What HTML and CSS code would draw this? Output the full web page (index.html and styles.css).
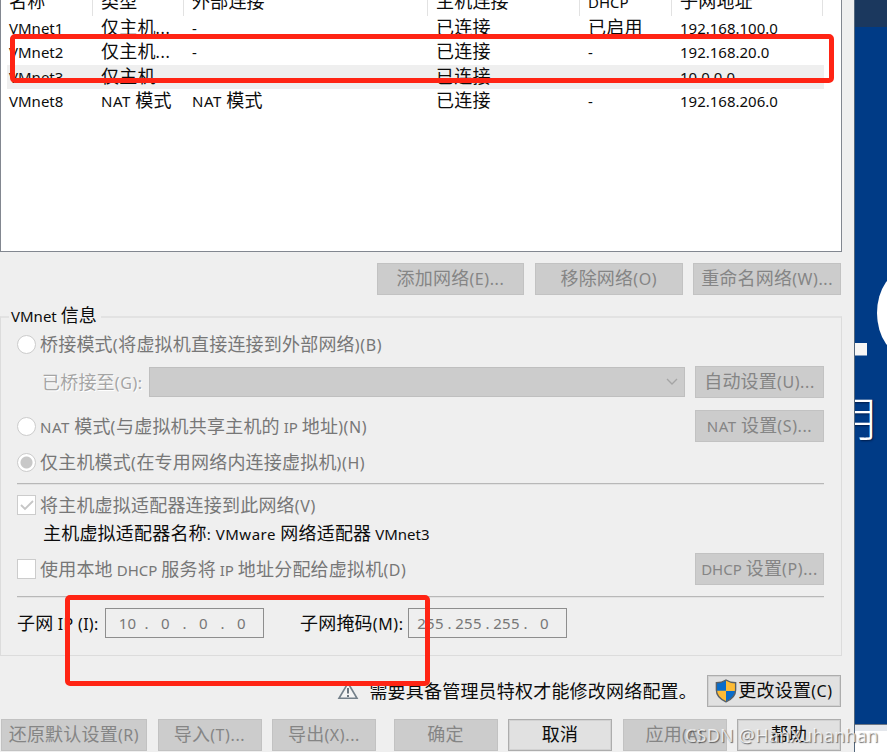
FILE: index.html
```html
<!DOCTYPE html>
<html lang="zh-CN">
<head>
<meta charset="utf-8">
<title>虚拟网络编辑器</title>
<link rel="stylesheet" href="styles.css">
</head>
<body>
<div class="screen">
  <main class="dialog">
    <section class="list">
      <div class="row head"><span>名称</span><span>类型</span><span>外部连接</span><span>主机连接</span><span><b>DHCP</b></span><span>子网地址</span></div>
      <div class="row"><span><b>VMnet1</b></span><span>仅主机<b class="k">...</b></span><span><b>-</b></span><span>已连接</span><span>已启用</span><span><b>192.168.100.0</b></span></div>
      <div class="row"><span><b>VMnet2</b></span><span>仅主机<b class="k">...</b></span><span><b>-</b></span><span>已连接</span><span><b>-</b></span><span><b>192.168.20.0</b></span></div>
      <div class="row selected"><span><b>VMnet3</b></span><span>仅主机<b class="k">...</b></span><span><b>-</b></span><span>已连接</span><span><b>-</b></span><span><b>10.0.0.0</b></span></div>
      <div class="row"><span><b>VMnet8</b></span><span><b class="n">NAT </b>模式</span><span><b class="n">NAT </b>模式</span><span>已连接</span><span><b>-</b></span><span><b>192.168.206.0</b></span></div>
    </section>

    <div class="list-actions">
      <div class="btn off">添加网络<b class="k">(E)...</b></div>
      <div class="btn off">移除网络<b class="k">(O)</b></div>
      <div class="btn off">重命名网络<b class="k">(W)...</b></div>
    </div>

    <section class="group">
      <div class="legend"><span><b>VMnet </b>信息</span></div>
      <div class="line bridge"><i class="radio"></i><span class="dim">桥接模式<b class="k">(</b>将虚拟机直接连接到外部网络<b class="k">)(B)</b></span></div>
      <div class="line bridge-to">
        <span class="etched">已桥接至<b class="k">(G):</b></span>
        <div class="combo"><svg width="14" height="10" viewBox="0 0 14 10"><path d="M2 2l5 5 5-5" fill="none" stroke="#a5a5a5" stroke-width="1.3"/></svg></div>
        <div class="btn off side">自动设置<b class="k">(U)...</b></div>
      </div>
      <div class="line nat"><i class="radio"></i><span class="dim"><b class="n">NAT </b>模式<b class="k">(</b>与虚拟机共享主机的<b> IP </b>地址<b class="k">)(N)</b></span><div class="btn off side"><b class="n">NAT </b>设置<b class="k">(S)...</b></div></div>
      <div class="line host"><i class="radio on"></i><span class="dim">仅主机模式<b class="k">(</b>在专用网络内连接虚拟机<b class="k">)(H)</b></span></div>
      <div class="rule"></div>
      <div class="line connect"><i class="check"><svg width="18" height="18" viewBox="0 0 18 18"><path d="M3 9l4 4 8-8" fill="none" stroke="#c6c6c6" stroke-width="1.8"/></svg></i><span class="dim">将主机虚拟适配器连接到此网络<b class="k">(V)</b></span></div>
      <div class="line adapter"><span>主机虚拟适配器名称<b class="n">: VMware </b>网络适配器<b> VMnet3</b></span></div>
      <div class="line dhcp"><i class="check"></i><span class="dim">使用本地<b> DHCP </b>服务将<b> IP </b>地址分配给虚拟机<b class="k">(D)</b></span><div class="btn off side"><b>DHCP </b>设置<b class="k">(P)...</b></div></div>
      <div class="rule"></div>
      <div class="line subnet">
        <span class="ip-label">子网<b class="k i"> IP (I):</b></span>
        <div class="ip"><span>10</span><em>.</em><span>0</span><em>.</em><span>0</span><em>.</em><span>0</span></div>
        <span class="mask-label">子网掩码<b class="k">(M):</b></span>
        <div class="ip"><span>255</span><em>.</em><span>255</span><em>.</em><span>255</span><em>.</em><span>0</span></div>
      </div>
    </section>

    <div class="notice">
      <svg width="22" height="20" viewBox="0 0 22 20"><path d="M11 2L20 17.3H2z" fill="#f4f4f4" stroke="#74808a" stroke-width="1.6"/><path d="M11 7v5.500M11 14v2" stroke="#5c6872" stroke-width="1.8"/></svg>
      <span>需要具备管理员特权才能修改网络配置。</span>
      <div class="btn admin">
        <svg width="22" height="24" viewBox="0 0 24 26"><path d="M12 1C9 3 5 4 1.500 4v8c0 6 5 10 10.500 12.500V13h10V4C19 4 15 3 12 1z" fill="#0a6cc9"/><path d="M12 1c3 2 7 3 10.500 3v9H12zM1.500 12.800H12v11.700C6 22 2 18 1.500 12.800z" fill="#fdbb35"/><path d="M12 13h10.300C22 18 18 22 12 24.500z" fill="#0a6cc9"/><path d="M12 1C9 3 5 4 1.500 4v8c0 6 5 10.500 10.500 12.800C17.500 22.500 22.500 18 22.500 12V4C19 4 15 3 12 1z" fill="none" stroke="#596066" stroke-width="1.5"/></svg>
        更改设置<b class="k">(C)</b>
      </div>
    </div>

    <footer class="footer">
      <div class="btn off">还原默认设置<b class="k">(R)</b></div>
      <div class="btn off">导入<b class="k">(T)...</b></div>
      <div class="btn off">导出<b class="k">(X)...</b></div>
      <div class="btn off">确定</div>
      <div class="btn">取消</div>
      <div class="btn off">应用<b class="k">(A)</b></div>
      <div class="btn">帮助</div>
    </footer>
  </main>
  <aside class="desktop">
    <div class="topbar"></div>
    <div class="wall">
      <svg width="32" height="420" viewBox="0 0 32 420"><ellipse cx="52" cy="286" rx="30" ry="43" fill="#fff"/><rect x="-2" y="316" width="14" height="12.500" fill="#f6f6f6"/></svg>
      <span class="month">月</span>
    </div>
    <div class="taskbar"></div>
  </aside>
  <div class="mark mark-list"></div>
  <div class="mark mark-ip"></div>
  <div class="watermark">CSDN @HanXuhanhan</div>
</div>
</body>
</html>
```
FILE: styles.css
```css
* { box-sizing: border-box; }
body {
  margin: 0;
  background: #fff;
  color: #0c0c0c;
  font: 18px/24px "Noto Sans CJK SC", sans-serif;
  letter-spacing: 0.2px;
}
b { font: 15px/20px "Noto Sans", sans-serif; letter-spacing: 0; white-space: pre; }
.k { font-size: 16px; letter-spacing: 0.6px; }
.i { letter-spacing: 0.3px; }
.n { letter-spacing: 0.5px; }
.screen { position: relative; display: flex; width: 887px; height: 752px; overflow: hidden; white-space: nowrap; }
.dialog { width: 855px; height: 752px; background: #efefef; border-right: 1px solid #54677c; flex: none; }

.list { width: 842px; height: 252px; background: #fff; border: 1px solid #828790; border-top: 0; }
.row { display: grid; grid-template-columns: 92px 91px 244px 152px 92px 151px; width: 823px; height: 24.400px; line-height: 20px; }
.row span { padding-left: 8px; }
.row b { line-height: 16px; }
.head { height: 16px; }
.head span { height: 16px; border-right: 1px solid #e2e2e2; line-height: 0; }
.head b { line-height: 0; }
.selected { background: linear-gradient(to right, #fff 6px, #efefef 6px); }

.btn { display: flex; align-items: baseline; justify-content: center; height: 32px; line-height: 27px; border: 1px solid #adadad; background: #e1e1e1; box-shadow: inset 0 0 0 1px #d2d2d2; flex: none; }
.off { color: #858585; background: #ccc; border-color: #c2c2c2; box-shadow: none; }
.list-actions { display: flex; justify-content: flex-end; gap: 10.500px; width: 841px; margin-top: 11px; }
.list-actions .btn { width: 147.800px; }

.group { width: 842px; height: 340px; margin-top: 21px; border: 1px solid #dcdcdc; border-top: 2px solid #e2e2e2; padding: 0 17px 0 16px; }
.legend { height: 12px; line-height: 24px; margin: -16px 0 0 -8px; }
.legend span { display: inline-block; background: #efefef; padding: 0 4px 0 2px; }
.line { display: flex; align-items: center; height: 32px; }
.line > span { margin-top: -3px; }
.dim { color: #777; }
.etched { color: #a5a5a5; text-shadow: 1px 1px #fff; width: 107px; }
.side { width: 129px; margin-left: auto; }
.bridge { margin-top: 14px; }
.bridge-to { margin-top: 6px; padding-left: 25px; }
.combo { display: flex; align-items: center; justify-content: flex-end; width: 536px; height: 30px; padding-right: 5px; background: #ccc; border: 1px solid #bfbfbf; }
.nat { margin-top: 12px; }
.host { margin-top: 4px; }
.radio { width: 19px; height: 19px; margin-right: 4px; border: 1px solid #ccc; border-radius: 50%; background: #fff; }
.on { background: radial-gradient(circle, #c8c8c8 5.500px, #fff 6.500px); }
.check { width: 19px; height: 20px; margin-right: 4px; border: 1px solid #ccc; background: #fff; }
.check svg { display: block; }
.rule { height: 2px; background: #b8b8b8; border-bottom: 1px solid #e2e2e2; margin-top: 5px; }
.connect { margin-top: 4px; }
.adapter { height: 24px; margin-top: 0; padding-left: 26px; }
.dhcp { margin-top: 8px; }
.rule ~ .rule { margin-top: 11px; }
.subnet { margin-top: 9px; }
.ip-label { width: 88px; }
.mask-label { width: 108px; }
.ip { display: grid; grid-template-columns: 31px 7px 31px 7px 31px 7px 31px; align-items: center; justify-content: center; text-align: center; width: 159px; height: 30px; border: 1px solid #8e8e8e; color: #777; font: 15px/26px "Noto Sans", sans-serif; margin-right: 36px; }
.ip em { font-style: normal; }

.notice { display: flex; align-items: center; justify-content: flex-end; width: 841px; height: 32px; margin-top: 19px; }
.notice > svg { margin-right: 10px; }
.notice > span { margin: -3px 10px 0 0; }
.admin { width: 134px; }
.admin svg { align-self: center; margin-right: 1px; }
.footer { display: flex; margin: 12px 0 0 1px; gap: 10.500px; }
.footer .btn { width: 104px; }
.footer .btn:first-child { width: 146px; }
.footer .btn:nth-child(4) { margin-left: 7px; }

.desktop { width: 32px; flex: none; }
.topbar { height: 27px; background: #1b385e; }
.wall { position: relative; height: 697px; background: #003b86; overflow: hidden; }
.month { position: absolute; left: -21px; top: 362px; color: #fff; font-size: 47px; font-weight: 300; line-height: 54px; text-shadow: 1px 1px 2px #001c48; }
.taskbar { height: 28px; border-top: 1px solid #6c7684; background: linear-gradient(#e4e7ec 6px, #fff 6px); }

.mark { position: absolute; border: 5px solid #ff2414; border-radius: 5px; }
.mark-list { left: 10px; top: 34px; width: 824px; height: 49px; }
.mark-ip { left: 65px; top: 595px; width: 365px; height: 91px; }
.watermark { position: absolute; left: 685px; top: 722px; color: rgba(255,255,255,.75); font: 18px/26px "Noto Sans", sans-serif; letter-spacing: 0.2px; text-shadow: 1px 1px 1px rgba(60,60,60,.75); }
```
